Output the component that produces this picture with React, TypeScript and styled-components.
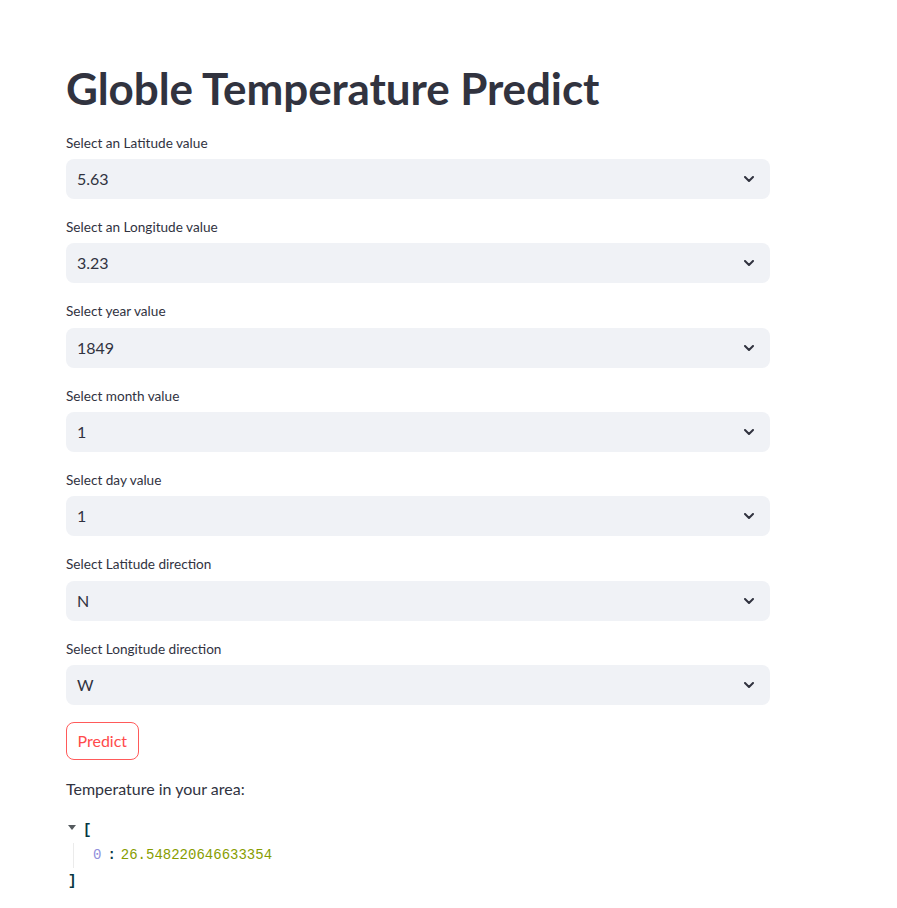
import React from "react";
import styled, { createGlobalStyle } from "styled-components";

const GlobalStyle = createGlobalStyle`
  html, body { margin: 0; padding: 0; background: #ffffff; }
  body { font-family: Lato, "Open Sans", sans-serif; color: #31333f; }
`;

const Main = styled.main`
  padding: 42px 66px 0 66px;
  width: 704px;
  display: flex;
  flex-direction: column;
  gap: 16px;
`;

const Title = styled.h1`
  margin: 0;
  padding: 20px 0 0 0;
  font-family: Lato, sans-serif;
  font-size: 44px;
  font-weight: 700;
  line-height: 52.8px;
  color: #31333f;
  letter-spacing: -0.1px;
`;

const Field = styled.div`
  display: flex;
  flex-direction: column;
`;

const Label = styled.label`
  font-size: 13.6px;
  line-height: 24.33px;
  color: #31333f;
  margin-bottom: 4px;
`;

const SelectBox = styled.div`
  height: 40px;
  box-sizing: border-box;
  background: #f0f2f6;
  border-radius: 8px;
  display: flex;
  align-items: center;
  justify-content: space-between;
  padding: 0 16px 0 11px;
  font-size: 16px;
  color: #31333f;
  cursor: pointer;
`;

const Value = styled.span`
  line-height: 24px;
`;

const Chevron = styled.svg`
  width: 10px;
  height: 6px;
  flex: none;
`;

const Button = styled.button`
  align-self: flex-start;
  height: 38px;
  margin-top: 1px;
  padding: 0 10.5px;
  border: 1px solid #ff5a5a;
  border-radius: 8px;
  background: #ffffff;
  color: #ff4b4b;
  font-family: Lato, sans-serif;
  font-size: 16px;
  line-height: 24px;
  cursor: pointer;
`;

const ResultText = styled.p`
  margin: 1px 0 0 0;
  font-size: 16px;
  line-height: 24px;
  color: #31333f;
`;

const Json = styled.div`
  font-family: "Liberation Mono", "DejaVu Sans Mono", monospace;
  font-size: 14px;
  margin-top: 0;
  padding-left: 2px;
`;

const JsonRow = styled.div`
  display: flex;
  align-items: center;
  height: 25.5px;
`;

const Toggle = styled.span`
  width: 0;
  height: 0;
  border-left: 4.5px solid transparent;
  border-right: 4.5px solid transparent;
  border-top: 5px solid #555a5e;
  margin: 0 7px 4px 0;
`;

const Bracket = styled.span`
  color: #073642;
  font-weight: 700;
`;

const Children = styled.div`
  margin-left: 5px;
  border-left: 1px solid #ebebeb;
  padding-left: 19px;
`;

const Key = styled.span`
  color: #8f90dc;
`;

const Colon = styled.span`
  color: #073642;
  margin: 0 5px 0 6px;
  font-weight: 700;
`;

const Num = styled.span`
  color: #879d00;
`;

const fields = [
  { label: "Select an Latitude value", value: "5.63" },
  { label: "Select an Longitude value", value: "3.23" },
  { label: "Select year value", value: "1849" },
  { label: "Select month value", value: "1" },
  { label: "Select day value", value: "1" },
  { label: "Select Latitude direction", value: "N" },
  { label: "Select Longitude direction", value: "W" },
];

export default function App() {
  return (
    <>
      <GlobalStyle />
      <Main>
        <Title>Globle Temperature Predict</Title>
        {fields.map((f) => (
          <Field key={f.label}>
            <Label>{f.label}</Label>
            <SelectBox>
              <Value>{f.value}</Value>
              <Chevron viewBox="0 0 10 6">
                <path d="M1 1 L5 5 L9 1" fill="none" stroke="#31333f" strokeWidth="2" strokeLinecap="round" strokeLinejoin="round" />
              </Chevron>
            </SelectBox>
          </Field>
        ))}
        <Button>Predict</Button>
        <ResultText>Temperature in your area:</ResultText>
        <Json>
          <JsonRow>
            <Toggle />
            <Bracket>[</Bracket>
          </JsonRow>
          <Children>
            <JsonRow>
              <Key>0</Key>
              <Colon>:</Colon>
              <Num>26.548220646633354</Num>
            </JsonRow>
          </Children>
          <JsonRow>
            <Bracket>]</Bracket>
          </JsonRow>
        </Json>
      </Main>
    </>
  );
}
